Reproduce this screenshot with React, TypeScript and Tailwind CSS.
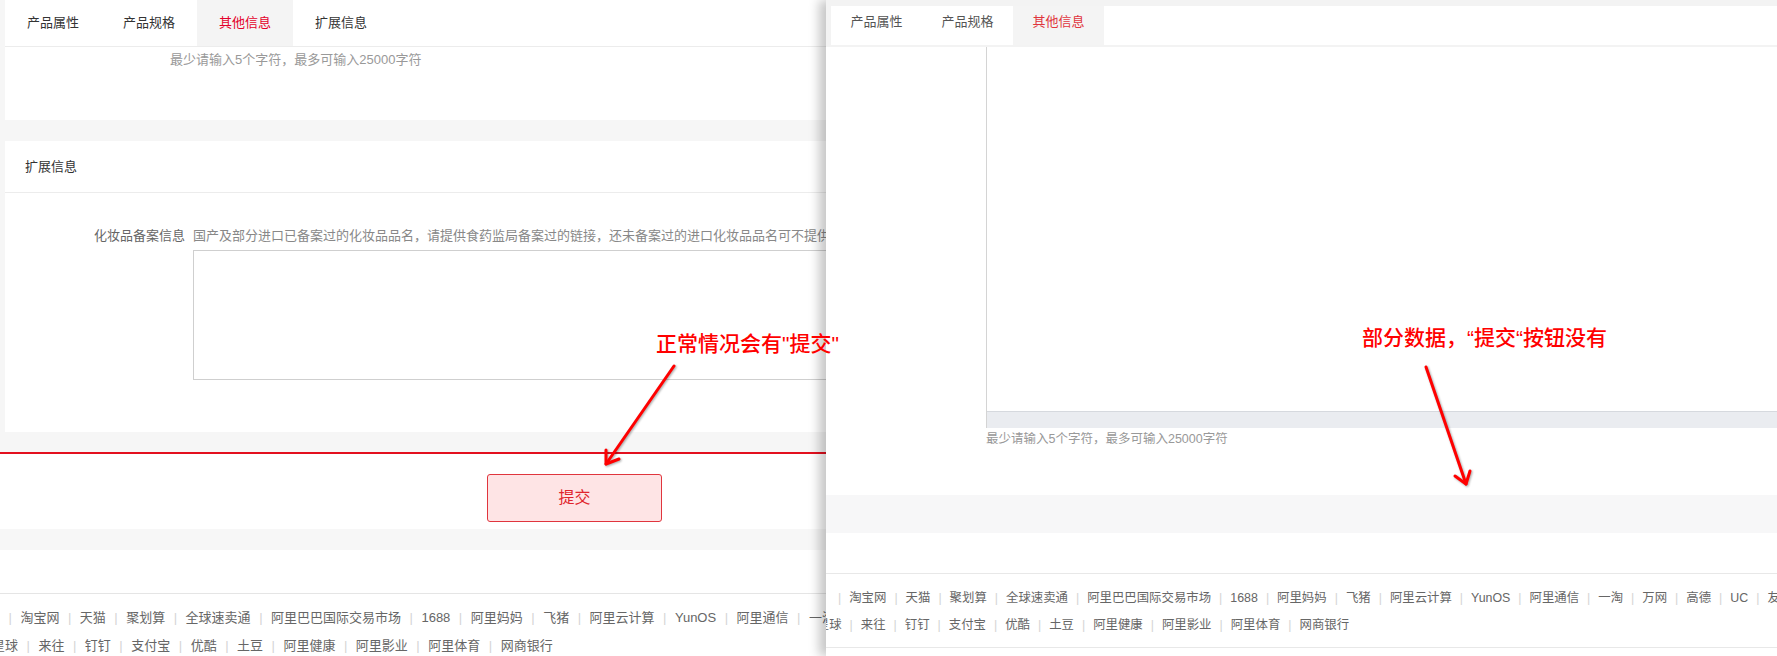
const row1 = [
  '淘宝网',
  '天猫',
  '聚划算',
  '全球速卖通',
  '阿里巴巴国际交易市场',
  '1688',
  '阿里妈妈',
  '飞猪',
  '阿里云计算',
  'YunOS',
  '阿里通信',
  '一淘',
  '万网',
  '高德',
  'UC',
  '友盟',
];

const row2 = ['阿里星球', '来往', '钉钉', '支付宝', '优酷', '土豆', '阿里健康', '阿里影业', '阿里体育', '网商银行'];

type LinkRowProps = {
  items: string[];
  lead?: boolean;
  sep: string;
  className?: string;
};

function LinkRow({ items, lead, sep, className }: LinkRowProps) {
  return (
    <div className={`flex whitespace-nowrap leading-[20px] text-[#666] ${className ?? ''}`}>
      {items.map((item, i) => (
        <span key={item} className="flex">
          {(i > 0 || lead) && <span className={`text-[#d4d4d4] ${sep}`}>|</span>}
          <span>{item}</span>
        </span>
      ))}
    </div>
  );
}

function LeftPanel() {
  return (
    <div className="flex w-[826px] shrink-0 flex-col overflow-hidden bg-[#f6f6f6] text-[13px] text-[#333]">
      {/* tabs card */}
      <div className="ml-[5px] h-[120px] w-[900px] bg-white">
        <div className="flex h-[47px] border-b border-[#ececec]">
          <div className="flex w-[96px] items-center justify-center">产品属性</div>
          <div className="flex w-[96px] items-center justify-center">产品规格</div>
          <div className="flex w-[96px] items-center justify-center bg-[#f4f4f4] text-[#e4002b]">其他信息</div>
          <div className="flex w-[96px] items-center justify-center">扩展信息</div>
        </div>
        <p className="pl-[165px] pt-[3px] leading-[20px] text-[#999]">最少请输入5个字符，最多可输入25000字符</p>
      </div>

      {/* ext info card */}
      <div className="ml-[5px] mt-[21px] h-[291px] w-[900px] bg-white">
        <div className="flex h-[52px] items-center border-b border-[#ececec] pl-5">扩展信息</div>
        <div className="flex pt-[33px]">
          <div className="w-[180px] shrink-0 text-right leading-[20px] text-[#666]">化妆品备案信息</div>
          <div className="ml-[8px]">
            <p className="whitespace-nowrap leading-[20px] text-[#888]">
              国产及部分进口已备案过的化妆品品名，请提供食药监局备案过的链接，还未备案过的进口化妆品品名可不提供
            </p>
            <div className="mt-[4px] h-[130px] w-[700px] border border-[#cfcfcf] bg-white" />
          </div>
        </div>
      </div>

      <div className="mt-[20px] h-[2px] bg-[#e3101e]" />
      <div className="flex h-[75px] bg-white pl-[487px]">
        <button className="mt-[20px] h-[48px] w-[175px] rounded-[3px] border border-[#e0353d] bg-[#fee4e5] text-[16px] text-[#e0252d]">
          提交
        </button>
      </div>
      <div className="h-[21px] bg-[#f7f7f7]" />
      <div className="h-[43px] bg-white" />
      <div className="flex-1 border-t border-[#e5e5e5] bg-white pt-[14px] text-[13px]">
        <LinkRow items={row1} lead sep="mx-[8.5px]" />
        <LinkRow items={row2} sep="mx-[8.5px]" className="-ml-[34px] mt-[8px]" />
      </div>
    </div>
  );
}

function RightPanel() {
  return (
    <div className="relative z-10 flex min-w-0 flex-1 flex-col overflow-hidden bg-white text-[13px] text-[#333] shadow-[-7px_0_10px_rgba(0,0,0,0.22)]">
      <div className="flex h-[47px] shrink-0 bg-[#f3f3f3] pt-[6px] pl-[5px]">
        <div className="flex h-[39px] flex-1 bg-white">
          <div className="w-[91px] pt-[6px] text-center leading-[20px] text-[#555]">产品属性</div>
          <div className="w-[91px] pt-[6px] text-center leading-[20px] text-[#555]">产品规格</div>
          <div className="w-[91px] bg-[#f4f4f4] pt-[6px] text-center leading-[20px] text-[#e0353d]">其他信息</div>
        </div>
      </div>
      <div className="h-[448px] shrink-0 bg-white pl-[160px]">
        <div className="flex h-[381px] w-[900px] flex-col justify-end border-l border-[#d4d4d4]">
          <div className="h-[17px] border-t border-[#d6d9de] bg-[#eaecf0]" />
        </div>
        <p className="mt-[1px] text-[12.5px] leading-[20px] text-[#999]">最少请输入5个字符，最多可输入25000字符</p>
      </div>
      <div className="h-[38px] shrink-0 bg-[#f7f7f8]" />
      <div className="h-[40px] shrink-0 bg-white" />
      <div className="shrink-0 border-y border-[#e8e8e8] bg-white pt-[14px] pb-[12px] text-[12.4px]">
        <LinkRow items={row1} lead sep="mx-[8px]" className="pl-[4px]" />
        <LinkRow items={row2} sep="mx-[8px]" className="-ml-[34px] mt-[7px]" />
      </div>
      <div className="flex-1 bg-white" />
    </div>
  );
}

export default function App() {
  return (
    <div
      className="relative flex h-[656px] w-[1777px] overflow-hidden bg-white"
      style={{ fontFamily: '"Liberation Sans", "Noto Sans CJK SC", sans-serif' }}
    >
      <LeftPanel />
      <RightPanel />

      <svg
        className="pointer-events-none absolute inset-0 z-20 drop-shadow-[1px_1px_1px_rgba(0,0,0,0.35)]"
        width="1777"
        height="656"
        viewBox="0 0 1777 656"
        fill="none"
        stroke="#f00"
        strokeWidth="3"
        strokeLinecap="round"
        strokeLinejoin="round"
      >
        <line x1="674" y1="366" x2="606" y2="464" />
        <polyline points="619,459 606,464 606,450" />
        <line x1="1426" y1="367" x2="1466" y2="484" />
        <polyline points="1470,471 1466,484 1455,476" />
      </svg>

      <p className="absolute left-[656px] top-[332px] z-30 whitespace-nowrap text-[21px] font-medium leading-[24px] text-[#f00]">
        正常情况会有"提交"
      </p>
      <p className="absolute left-[1362px] top-[326px] z-30 whitespace-nowrap text-[21px] font-medium leading-[24px] text-[#f00]">
        部分数据，“提交“按钮没有
      </p>
    </div>
  );
}
